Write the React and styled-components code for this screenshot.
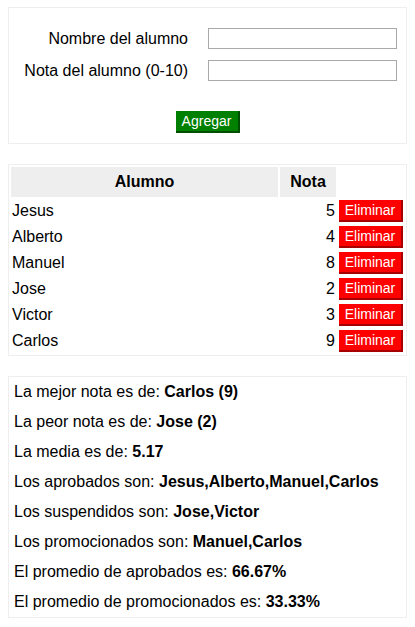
import styled, { createGlobalStyle } from 'styled-components'

const GlobalStyle = createGlobalStyle`
  body {
    margin: 7px 8px 8px;
    font-family: 'Liberation Sans', Arial, sans-serif;
    font-size: 16px;
    color: #000;
    background: #fff;
  }
`

const alumnos = [
  { nombre: 'Jesus', nota: 5 },
  { nombre: 'Alberto', nota: 4 },
  { nombre: 'Manuel', nota: 8 },
  { nombre: 'Jose', nota: 2 },
  { nombre: 'Victor', nota: 3 },
  { nombre: 'Carlos', nota: 9 },
]

function App() {
  const sorted = [...alumnos].sort((a, b) => b.nota - a.nota)
  const mejor = sorted[0]
  const peor = sorted[sorted.length - 1]
  const media = (alumnos.reduce((s, a) => s + a.nota, 0) / alumnos.length).toFixed(2)
  const aprobados = alumnos.filter((a) => a.nota >= 4)
  const suspendidos = alumnos.filter((a) => a.nota < 4)
  const promocionados = alumnos.filter((a) => a.nota >= 8)
  const pct = (n) => ((n / alumnos.length) * 100).toFixed(2) + '%'

  return (
    <>
      <GlobalStyle />
      <Page>
        <Panel>
          <Form onSubmit={(e) => e.preventDefault()}>
            <Label htmlFor='nombre'>Nombre del alumno</Label>
            <Input id='nombre' type='text' />
            <Label htmlFor='nota'>Nota del alumno (0-10)</Label>
            <Input id='nota' type='text' />
            <Actions>
              <Button type='submit' $color='#008000' $shade='#004f00'>
                Agregar
              </Button>
            </Actions>
          </Form>
        </Panel>

        <Panel>
          <Table>
            <colgroup>
              <col style={{ width: 267 }} />
              <col style={{ width: 56 }} />
              <col style={{ width: 66 }} />
            </colgroup>
            <thead>
              <tr>
                <Th>Alumno</Th>
                <Th>Nota</Th>
                <EmptyTh />
              </tr>
            </thead>
            <tbody>
              {alumnos.map((a) => (
                <tr key={a.nombre}>
                  <Td>{a.nombre}</Td>
                  <Td $align='right'>{a.nota}</Td>
                  <Td>
                    <Button type='button' $color='#ff0000' $shade='#a80000'>
                      Eliminar
                    </Button>
                  </Td>
                </tr>
              ))}
            </tbody>
          </Table>
        </Panel>

        <Panel>
          <Stats>
            <Line>
              La mejor nota es de: <b>{mejor.nombre} ({mejor.nota})</b>
            </Line>
            <Line>
              La peor nota es de: <b>{peor.nombre} ({peor.nota})</b>
            </Line>
            <Line>
              La media es de: <b>{media}</b>
            </Line>
            <Line>
              Los aprobados son: <b>{aprobados.map((a) => a.nombre).join(',')}</b>
            </Line>
            <Line>
              Los suspendidos son: <b>{suspendidos.map((a) => a.nombre).join(',')}</b>
            </Line>
            <Line>
              Los promocionados son: <b>{promocionados.map((a) => a.nombre).join(',')}</b>
            </Line>
            <Line>
              El promedio de aprobados es: <b>{pct(aprobados.length)}</b>
            </Line>
            <Line>
              El promedio de promocionados es: <b>{pct(promocionados.length)}</b>
            </Line>
          </Stats>
        </Panel>
      </Page>
    </>
  )
}

const Page = styled.main`
  display: flex;
  flex-direction: column;
  gap: 20px;
`

const Panel = styled.section`
  border: 1px solid #eee;
  background: #fff;
`

const Form = styled.form`
  display: grid;
  grid-template-columns: 1fr 189px;
  column-gap: 20px;
  row-gap: 11px;
  align-items: center;
  padding: 20px 9px 10px 0;
`

const Label = styled.label`
  text-align: right;
  line-height: 18px;
`

const Input = styled.input`
  box-sizing: border-box;
  width: 189px;
  height: 21px;
  margin: 0;
  padding: 0 2px;
  border: 1px solid #a9a9a9;
  font: inherit;
  font-size: 13px;
`

const Actions = styled.div`
  grid-column: 1 / -1;
  display: flex;
  justify-content: center;
  padding-left: 9px;
  margin-top: 19px;
`

const Button = styled.button`
  box-sizing: border-box;
  width: 64px;
  height: 22px;
  margin: 0;
  padding: 0;
  border: none;
  border-right: 2px solid ${(p) => p.$shade};
  border-bottom: 2px solid ${(p) => p.$shade};
  background: ${(p) => p.$color};
  color: #fff;
  font-family: 'Liberation Sans', Arial, sans-serif;
  font-size: 14px;
  line-height: 20px;
  vertical-align: middle;
  cursor: pointer;
`

const Table = styled.table`
  width: 100%;
  table-layout: fixed;
  border-spacing: 2px;
`

const Th = styled.th`
  background: #eee;
  padding: 6px 1px;
  line-height: 18px;
  font-weight: bold;
  text-align: center;
`

const EmptyTh = styled.th`
  padding: 0;
`

const Td = styled.td`
  padding: 1px;
  line-height: 18px;
  text-align: ${(p) => p.$align || 'left'};
  vertical-align: middle;
`

const Stats = styled.div`
  display: flex;
  flex-direction: column;
  gap: 12px;
  padding: 6px 5px;
`

const Line = styled.p`
  margin: 0;
  line-height: 18px;
`

export default App
